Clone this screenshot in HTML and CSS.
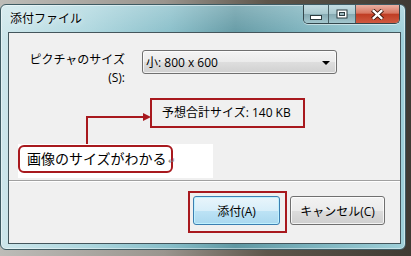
FILE: index.html
```html
<!DOCTYPE html>
<html lang="ja">
<head>
    <meta charset="UTF-8">
    <meta name="viewport" content="width=device-width, initial-scale=1.0">
    <title>添付ファイル</title>
    <link rel="stylesheet" href="styles.css">
</head>
<body>

<div class="window">
    <div class="titlebar">
        <span class="title">添付ファイル</span>
        <div class="caption-buttons">
            <span class="cap cap-min">
                <svg width="12" height="6" viewBox="0 0 12 6"><rect x="0.5" y="1.5" width="11" height="4" fill="#fff" stroke="#2d3c40"/></svg>
            </span>
            <span class="cap cap-max">
                <svg width="12" height="10" viewBox="0 0 12 10"><rect x="0.5" y="0.5" width="11" height="9" fill="#2d3c40"/><rect x="1.5" y="1.5" width="9" height="7" fill="#fff"/><rect x="3.5" y="3.5" width="5" height="3" fill="#9db9bf" stroke="#2d3c40"/></svg>
            </span>
            <span class="cap cap-close">
                <svg width="13" height="11" viewBox="0 0 13 11"><path d="M1.5 1 L11.5 10 M11.5 1 L1.5 10" stroke="#3a1208" stroke-width="4.2"/><path d="M1.8 1.2 L11.2 9.8 M11.2 1.2 L1.8 9.8" stroke="#fff" stroke-width="2.4"/></svg>
            </span>
        </div>
    </div>

    <div class="client">
        <div class="content">
            <div class="size-row">
                <label class="size-label" for="pictureSize">
                    <span class="label-line">ピクチャのサイズ</span>
                    <span class="label-line">(S):</span>
                </label>
                <div class="combo" id="pictureSize">
                    <span>小: 800 x 600</span>
                    <span class="combo-arrow"></span>
                </div>
            </div>

            <div class="estimate">予想合計サイズ: 140 KB</div>

            <div class="note">
                <div class="note-box">画像のサイズがわかる<span class="para-mark">↵</span></div>
            </div>

            <svg class="connector" width="150" height="40" viewBox="0 0 150 40">
                <path d="M78 40 V13 H135" fill="none" stroke="#a8191e" stroke-width="2"/>
                <path d="M134 9 L142 13 L134 17 Z" fill="#a8191e"/>
            </svg>
        </div>

        <div class="footer">
            <span class="default-mark"><button class="btn btn-default" type="button">添付(A)</button></span>
            <button class="btn btn-cancel" type="button">キャンセル(C)</button>
        </div>
    </div>
</div>

</body>
</html>
```

FILE: styles.css
```css
* {
    box-sizing: border-box;
}
body {
    margin: 0;
    width: 411px;
    height: 256px;
    overflow: hidden;
    font-family: "Open Sans", "Noto Sans CJK JP", sans-serif;
    font-size: 12px;
    color: #000;
    background: linear-gradient(90deg, #bdbcb8 0%, #9a958e 40%, #5e564b 65%, #3f3a33 100%);
}
.window {
    margin-top: 4px;
    width: 406px;
    height: 246px;
    padding: 0 4px 5px 7px;
    display: flex;
    flex-direction: column;
    border: 1px solid #3e5b63;
    border-radius: 6px;
    background:
        linear-gradient(180deg, rgba(255, 255, 255, 0.25) 0%, rgba(255, 255, 255, 0) 14%),
        linear-gradient(90deg, #cde6eb 0%, #acd6de 22%, #86bdc8 42%, #5f97a2 58%, #78b0bb 75%, #9fd0d9 100%);
    box-shadow: inset 0 0 0 1px rgba(255, 255, 255, 0.45);
}
.titlebar {
    height: 27px;
    display: flex;
    justify-content: space-between;
    align-items: flex-start;
}
.title {
    padding: 6px 0 0 2px;
    font-size: 12px;
    line-height: 15px;
    color: #000;
    text-shadow: 0 0 6px rgba(255, 255, 255, 0.9);
}
.caption-buttons {
    display: flex;
    height: 19px;
    margin-right: 1px;
    border: 1px solid #34474c;
    border-top: none;
    border-radius: 0 0 5px 5px;
    overflow: hidden;
    box-shadow: 0 1px 0 rgba(255, 255, 255, 0.5);
}
.cap {
    display: flex;
    align-items: center;
    justify-content: center;
    height: 100%;
}
.cap-min,
.cap-max {
    background: linear-gradient(180deg, #c4dde2 0%, #a9c9cf 48%, #86aab2 52%, #a3c7ce 100%);
    border-right: 1px solid #4a6066;
}
.cap-min {
    width: 25px;
    padding-top: 5px;
}
.cap-max {
    width: 27px;
}
.cap-close {
    width: 43px;
    background: linear-gradient(180deg, #eab1a3 0%, #d87762 45%, #c03d24 52%, #cf5a40 100%);
}
.client {
    flex: 1;
    display: flex;
    flex-direction: column;
    background: #f0f0f0;
    border: 1px solid #44565c;
}
.content {
    position: relative;
    height: 148px;
    border-bottom: 1px solid #a0a0a0;
    box-shadow: 0 1px 0 #fff;
}
.size-row {
    display: flex;
    align-items: flex-start;
    gap: 17px;
    padding-top: 17px;
}
.size-label {
    width: 116px;
    margin-top: 1px;
    text-align: right;
}
.label-line {
    display: block;
    line-height: 18px;
}
.combo {
    width: 195px;
    height: 24px;
    display: flex;
    align-items: center;
    justify-content: space-between;
    padding: 0 6px 0 3px;
    border: 1px solid #707070;
    border-radius: 3px;
    background: linear-gradient(180deg, #f4f4f4 0%, #ebebeb 50%, #dedede 51%, #d0d0d0 100%);
    box-shadow: inset 0 0 0 1px rgba(255, 255, 255, 0.7);
}
.combo-arrow {
    width: 0;
    height: 0;
    border-left: 4px solid transparent;
    border-right: 4px solid transparent;
    border-top: 4px solid #000;
    margin-top: 2px;
}
.estimate {
    margin: 11px 0 0 141px;
    width: 155px;
    height: 30px;
    padding-left: 10px;
    line-height: 26px;
    border: 2px solid #a8191e;
    white-space: nowrap;
}
.note {
    margin: 16px 0 0 9px;
    width: 195px;
    height: 34px;
    padding-top: 1px;
    background: #fff;
}
.note-box {
    width: 155px;
    height: 28px;
    padding-left: 7px;
    font-size: 14px;
    line-height: 24px;
    border: 2px solid #a8191e;
    border-radius: 6px;
    background: #fff;
    white-space: nowrap;
}
.para-mark {
    font-size: 9px;
    color: #8a8a8a;
    margin-left: 1px;
}
.connector {
    position: absolute;
    left: 0;
    top: 71px;
}
.footer {
    flex: 1;
    display: flex;
    justify-content: flex-end;
    align-items: flex-start;
    padding: 10px 15px 0 0;
}
.default-mark {
    display: flex;
    padding: 3px 5px 6px 3px;
    border: 2px solid #a8191e;
}
.btn {
    height: 29px;
    padding: 0;
    font-family: inherit;
    font-size: 12px;
    color: #000;
    border: 1px solid #707070;
    border-radius: 3px;
    background: linear-gradient(180deg, #f2f2f2 0%, #ebebeb 50%, #dddddd 51%, #cfcfcf 100%);
    box-shadow: inset 0 0 0 1px rgba(255, 255, 255, 0.75);
}
.btn-default {
    width: 87px;
    border-color: #3c7fb1;
    background: linear-gradient(180deg, #e9f5fb 0%, #d7eef9 50%, #bde3f5 51%, #a9d8ef 100%);
    box-shadow: inset 0 0 0 1px #bff1ff;
}
.btn-cancel {
    width: 95px;
    margin: 5px 0 0 3px;
}
```
